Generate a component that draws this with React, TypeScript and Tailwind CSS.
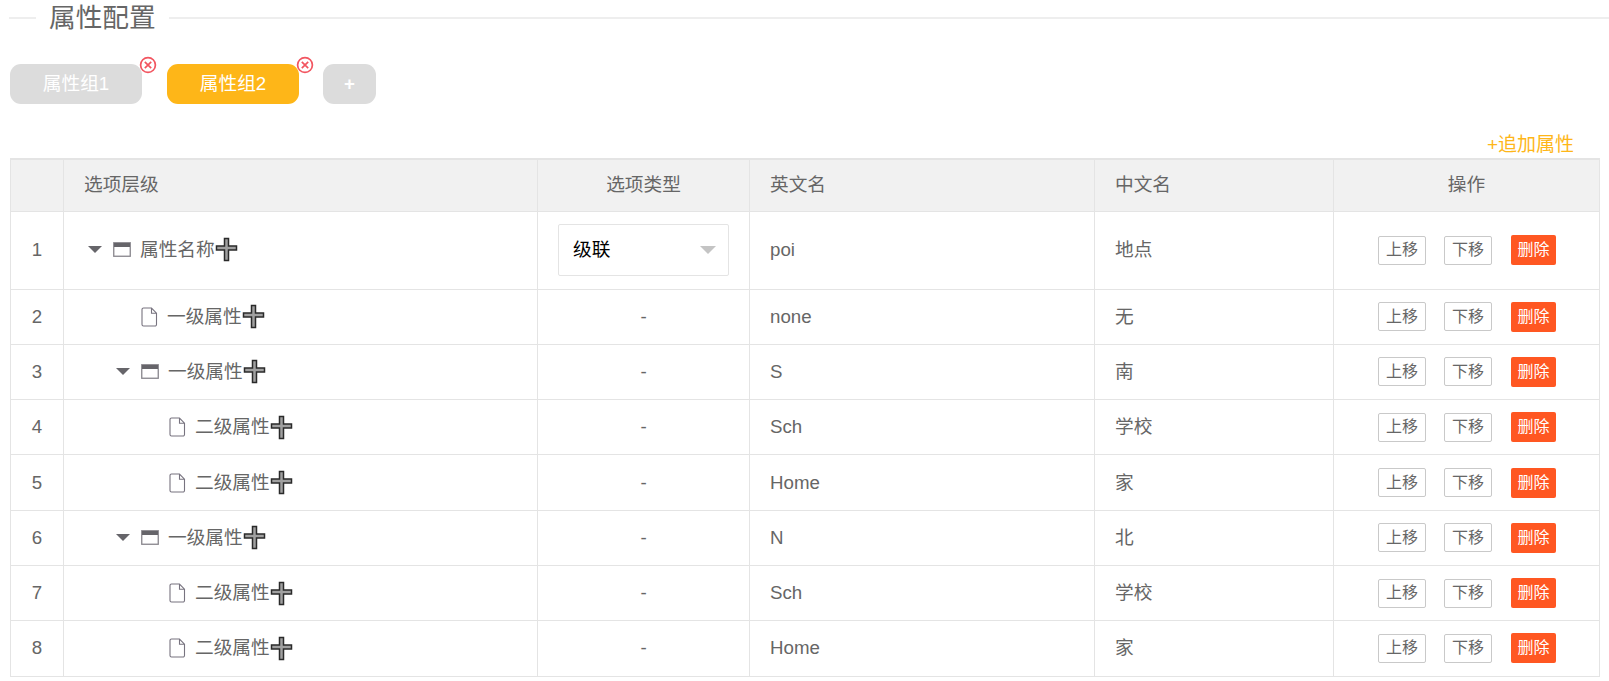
import { ReactNode } from "react";

const rows = [
  { type: "root", level: 0, name: "属性名称", en: "poi", cn: "地点" },
  { type: "leaf", level: 1, name: "一级属性", en: "none", cn: "无" },
  { type: "node", level: 1, name: "一级属性", en: "S", cn: "南" },
  { type: "leaf", level: 2, name: "二级属性", en: "Sch", cn: "学校" },
  { type: "leaf", level: 2, name: "二级属性", en: "Home", cn: "家" },
  { type: "node", level: 1, name: "一级属性", en: "N", cn: "北" },
  { type: "leaf", level: 2, name: "二级属性", en: "Sch", cn: "学校" },
  { type: "leaf", level: 2, name: "二级属性", en: "Home", cn: "家" },
];

function CloseDot() {
  return (
    <svg width="18" height="18" viewBox="0 0 18 18" fill="none" className="absolute -top-[8px] -right-[15px]">
      <circle cx="9" cy="9" r="7.4" stroke="#f25560" strokeWidth="1.7" />
      <path d="M5.8 5.8l6.4 6.4M12.2 5.8l-6.4 6.4" stroke="#f25560" strokeWidth="1.7" />
    </svg>
  );
}

function Plus() {
  return (
    <svg width="23" height="25" viewBox="0 0 23 25" className="shrink-0">
      <path
        d="M9.5 1.5h4v7.5h8v4h-8v10.5h-4V13h-8V9h8z"
        fill="#a0a0a0"
        stroke="#2a2a2a"
        strokeWidth="1.5"
      />
    </svg>
  );
}

function Folder() {
  return (
    <svg width="18" height="15" viewBox="0 0 18 15" className="shrink-0">
      <rect x="0.75" y="0.75" width="16.5" height="13.5" fill="#fff" stroke="#88868c" strokeWidth="1.3" />
      <rect x="1" y="1" width="16" height="4" fill="#66656a" />
    </svg>
  );
}

function FileIcon() {
  return (
    <svg width="17" height="20" viewBox="0 0 17 20" fill="none" className="shrink-0">
      <path
        d="M2.5 1h8l5 5.2V17.5a1.5 1.5 0 0 1-1.5 1.5H2.5A1.5 1.5 0 0 1 1 17.5v-15A1.5 1.5 0 0 1 2.5 1zM10.5 1v5.2h5"
        stroke="#77737f"
        strokeWidth="1.1"
      />
    </svg>
  );
}

function Th({ children, center }: { children?: ReactNode; center?: boolean }) {
  return (
    <th className={`border border-[#e4e4e4] px-5 font-normal ${center ? "text-center" : "text-left"}`}>
      {children}
    </th>
  );
}

export default function App() {
  return (
    <div
      className="h-[681px] overflow-hidden bg-white text-[18.7px] text-[#666]"
      style={{ fontFamily: '"Liberation Sans", "Noto Sans CJK SC", sans-serif' }}
    >
      <div className="flex h-[36px] items-center pl-[9px]">
        <div className="h-[2px] w-[27px] bg-[#eeeeee]" />
        <h2 className="px-[13px] text-[26.7px] font-normal leading-[36px] text-[#666]">属性配置</h2>
        <div className="h-[2px] flex-1 bg-[#eeeeee]" />
      </div>

      <div className="mt-[28px] flex gap-[24px] pl-[10px] text-white">
        <div className="relative mr-px flex h-[40px] w-[132px] items-center justify-center rounded-[11px] bg-[#dcdcdc]">
          属性组1
          <CloseDot />
        </div>
        <div className="relative flex h-[40px] w-[132px] items-center justify-center rounded-[11px] bg-[#feb618]">
          属性组2
          <CloseDot />
        </div>
        <div className="flex h-[40px] w-[53px] items-center justify-center rounded-[11px] bg-[#dcdcdc] font-bold">+</div>
      </div>

      <div className="mt-[27px] flex h-[27px] justify-end pr-[35px] text-[19px] leading-[27px] text-[#feb618]">
        +追加属性
      </div>

      <table className="ml-[10px] w-[1590px] table-fixed border-collapse border-t-2 border-[#e4e4e4]">
        <colgroup>
          <col className="w-[53px]" />
          <col className="w-[474px]" />
          <col className="w-[212px]" />
          <col className="w-[345px]" />
          <col className="w-[239px]" />
          <col />
        </colgroup>
        <thead>
          <tr className="h-[52px] bg-[#f1f1f1]">
            <Th />
            <Th>选项层级</Th>
            <Th center>选项类型</Th>
            <Th>英文名</Th>
            <Th>中文名</Th>
            <Th center>操作</Th>
          </tr>
        </thead>
        <tbody>
          {rows.map((row, i) => (
            <tr key={i} className={row.type === "root" ? "h-[78px]" : "h-[55.3px]"}>
              <td className="border border-[#e4e4e4] text-center">{i + 1}</td>
              <td className="border border-[#e4e4e4] px-5">
                <div className={`flex items-center ${row.level === 0 ? "pl-[4px]" : row.level === 1 ? "pl-[32px]" : "pl-[60px]"}`}>
                  {row.type === "leaf" ? (
                    <div className="ml-[25px] mr-[9px] flex w-[17px] justify-center">
                      <FileIcon />
                    </div>
                  ) : (
                    <>
                      <div className="mr-[11px] h-0 w-0 border-x-[7px] border-t-[7px] border-x-transparent border-t-[#66656a]" />
                      <div className="mr-[9px]">
                        <Folder />
                      </div>
                    </>
                  )}
                  <span>{row.name}</span>
                  <Plus />
                </div>
              </td>
              <td className="border border-[#e4e4e4] px-[20px] text-center">
                {row.type === "root" ? (
                  <div className="flex h-[52px] items-center justify-between rounded-[2px] border border-[#e4e4e4] pr-[12px] pl-[14px] text-black">
                    级联
                    <div className="h-0 w-0 border-x-[8px] border-t-[8px] border-x-transparent border-t-[#c4c4c4]" />
                  </div>
                ) : (
                  "-"
                )}
              </td>
              <td className="border border-[#e4e4e4] px-5">{row.en}</td>
              <td className="border border-[#e4e4e4] px-5">{row.cn}</td>
              <td className="border border-[#e4e4e4]">
                <div className="flex items-center pl-[44px] text-[16px]">
                  <button className="h-[29px] w-[48px] rounded-[2px] border border-[#c9c9c9] leading-none">上移</button>
                  <button className="ml-[18px] h-[29px] w-[48px] rounded-[2px] border border-[#c9c9c9] leading-none">下移</button>
                  <button className="ml-[19px] h-[30px] w-[45px] rounded-[2px] bg-[#ff5722] leading-none text-white">删除</button>
                </div>
              </td>
            </tr>
          ))}
        </tbody>
      </table>
    </div>
  );
}
